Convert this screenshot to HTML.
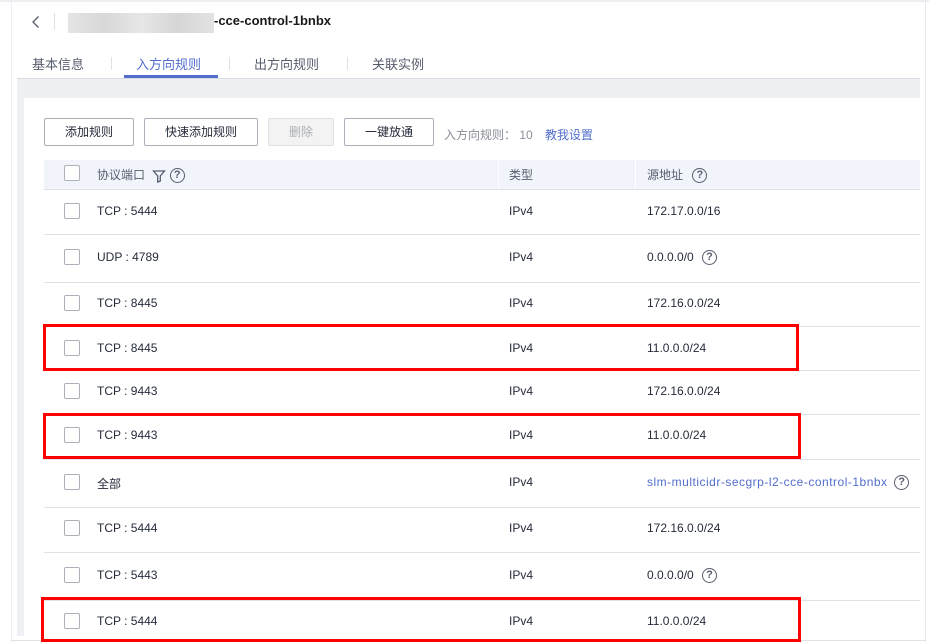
<!DOCTYPE html>
<html><head><meta charset="utf-8"><style>
*{margin:0;padding:0;box-sizing:border-box}
body{width:929px;height:642px;background:#fff;position:relative;overflow:hidden;font-family:"Liberation Sans","Noto Sans CJK SC",sans-serif;color:#252b3a;font-size:12px}
.a{position:absolute}
.cb{position:absolute;left:64px;width:16px;height:16px;border:1px solid #adb0b8;border-radius:2px;background:#fff}
.t{position:absolute;white-space:nowrap;font-size:12px}
.line{position:absolute;left:44px;width:876px;height:1px;background:#dfe1e6}
.btn{position:absolute;top:118px;height:28px;border:1px solid #adb0b8;border-radius:2px;background:#fff;font-size:12px;text-align:center;line-height:26px;color:#252b3a}
.q{display:inline-block;width:15px;height:15px;border:1.3px solid #575d6c;border-radius:50%;font-size:11px;line-height:12px;text-align:center;color:#575d6c;font-weight:bold;vertical-align:middle}
.red{position:absolute;border:3px solid #f00}
</style></head><body>
<div class="a" style="left:0;top:0;width:929px;height:2px;background:#eceef2"></div>
<div class="a" style="left:11px;top:0;width:1px;height:642px;background:#eceef2"></div>
<div class="a" style="left:925px;top:0;width:1px;height:642px;background:#e6e8ec"></div>
<!-- header -->
<svg class="a" style="left:31px;top:15px" width="10" height="14" viewBox="0 0 10 14"><path d="M7.5 1.5L2 7l5.5 5.5" fill="none" stroke="#575d6c" stroke-width="1.3"/></svg>
<div class="a" style="left:54px;top:13px;width:1px;height:17px;background:#dfe1e6"></div>
<div class="a" style="left:68px;top:13px;width:146px;height:20px;background:linear-gradient(90deg,#e4e4e4,#d8d8d8,#e6e6e6,#d6d6d6,#e2e2e2)"></div>
<div class="t" style="left:214px;top:13px;font-size:13px;font-weight:bold;color:#191919">-cce-control-1bnbx</div>
<!-- tabs -->
<div class="t" style="left:32px;top:54px;font-size:13px;color:#575d6c">基本信息</div>
<div class="a" style="left:111px;top:57px;width:1px;height:13px;background:#dfe1e6"></div>
<div class="t" style="left:136px;top:54px;font-size:13px;color:#526ecc">入方向规则</div>
<div class="a" style="left:124px;top:75px;width:94px;height:3px;background:#526ecc"></div>
<div class="a" style="left:229px;top:57px;width:1px;height:13px;background:#dfe1e6"></div>
<div class="t" style="left:254px;top:54px;font-size:13px;color:#575d6c">出方向规则</div>
<div class="a" style="left:347px;top:57px;width:1px;height:13px;background:#dfe1e6"></div>
<div class="t" style="left:372px;top:54px;font-size:13px;color:#575d6c">关联实例</div>
<!-- gray area -->
<div class="a" style="left:17px;top:78px;width:903px;height:558px;background:#eef0f4"></div>
<div class="a" style="left:24px;top:98px;width:896px;height:544px;background:#fff"></div>
<div class="a" style="left:17px;top:78px;width:903px;height:1px;background:#d9dbe0"></div>
<!-- buttons -->
<div class="btn" style="left:44px;width:90px">添加规则</div>
<div class="btn" style="left:144px;width:114px">快速添加规则</div>
<div class="btn" style="left:268px;width:66px;background:#f3f3f3;border-color:#dfe1e6;color:#adb0b8">删除</div>
<div class="btn" style="left:344px;width:90px">一键放通</div>
<div class="t" style="left:444px;top:126px;color:#8a8e99">入方向规则： 10</div>
<div class="t" style="left:545px;top:126px;color:#526ecc">教我设置</div>
<!-- table header -->
<div class="a" style="left:44px;top:160px;width:876px;height:30px;background:#f1f4fb"></div>
<div class="a" style="left:44px;top:189px;width:876px;height:1px;background:#dfe1e6"></div>
<div class="a" style="left:498px;top:160px;width:1px;height:29px;background:#fff"></div>
<div class="a" style="left:635px;top:160px;width:1px;height:29px;background:#fff"></div>
<div class="cb" style="top:165px"></div>
<div class="t" style="left:97px;top:166px;color:#575d6c">协议端口 <svg width="14" height="14" viewBox="0 0 14 14" style="vertical-align:middle;margin-left:4px"><path d="M1.5 2h11l-4.2 5v5l-2.6 1V7z" fill="none" stroke="#575d6c" stroke-width="1.3"/></svg> <span class="q">?</span></div>
<div class="t" style="left:509px;top:166px;color:#575d6c">类型</div>
<div class="t" style="left:647px;top:166px;color:#575d6c">源地址 <span class="q" style="margin-left:6px">?</span></div>
<!-- rows -->
<div class="cb" style="top:203px"></div><div class="t" style="left:97px;top:204px">TCP : 5444</div><div class="t" style="left:509px;top:204px">IPv4</div><div class="t" style="left:647px;top:204px">172.17.0.0/16</div>
<div class="line" style="top:234px"></div>
<div class="cb" style="top:249px"></div><div class="t" style="left:97px;top:250px">UDP : 4789</div><div class="t" style="left:509px;top:250px">IPv4</div><div class="t" style="left:647px;top:250px">0.0.0.0/0 <span class="q" style="margin-left:5px">?</span></div>
<div class="line" style="top:282px"></div>
<div class="cb" style="top:295px"></div><div class="t" style="left:97px;top:296px">TCP : 8445</div><div class="t" style="left:509px;top:296px">IPv4</div><div class="t" style="left:647px;top:296px">172.16.0.0/24</div>
<div class="line" style="top:326px"></div>
<div class="cb" style="top:340px"></div><div class="t" style="left:97px;top:341px">TCP : 8445</div><div class="t" style="left:509px;top:341px">IPv4</div><div class="t" style="left:647px;top:341px">11.0.0.0/24</div>
<div class="line" style="top:370px"></div>
<div class="cb" style="top:383px"></div><div class="t" style="left:97px;top:384px">TCP : 9443</div><div class="t" style="left:509px;top:384px">IPv4</div><div class="t" style="left:647px;top:384px">172.16.0.0/24</div>
<div class="line" style="top:414px"></div>
<div class="cb" style="top:427px"></div><div class="t" style="left:97px;top:428px">TCP : 9443</div><div class="t" style="left:509px;top:428px">IPv4</div><div class="t" style="left:647px;top:428px">11.0.0.0/24</div>
<div class="line" style="top:459px"></div>
<div class="cb" style="top:474px"></div><div class="t" style="left:97px;top:475px">全部</div><div class="t" style="left:509px;top:475px">IPv4</div><div class="t" style="left:647px;top:475px;color:#526ecc;letter-spacing:0.5px">slm-multicidr-secgrp-l2-cce-control-1bnbx <span class="q" style="margin-left:3px">?</span></div>
<div class="line" style="top:507px"></div>
<div class="cb" style="top:520px"></div><div class="t" style="left:97px;top:521px">TCP : 5444</div><div class="t" style="left:509px;top:521px">IPv4</div><div class="t" style="left:647px;top:521px">172.16.0.0/24</div>
<div class="line" style="top:552px"></div>
<div class="cb" style="top:567px"></div><div class="t" style="left:97px;top:568px">TCP : 5443</div><div class="t" style="left:509px;top:568px">IPv4</div><div class="t" style="left:647px;top:568px">0.0.0.0/0 <span class="q" style="margin-left:5px">?</span></div>
<div class="line" style="top:600px"></div>
<div class="cb" style="top:613px"></div><div class="t" style="left:97px;top:614px">TCP : 5444</div><div class="t" style="left:509px;top:614px">IPv4</div><div class="t" style="left:647px;top:614px">11.0.0.0/24</div>
<div class="a" style="left:11px;top:640px;width:915px;height:1px;background:#dfe1e6"></div>
<!-- red boxes -->
<div class="red" style="left:43px;top:324px;width:756px;height:47px"></div>
<div class="red" style="left:43px;top:413px;width:758px;height:46px"></div>
<div class="red" style="left:41px;top:597px;width:760px;height:45px"></div>
</body></html>
